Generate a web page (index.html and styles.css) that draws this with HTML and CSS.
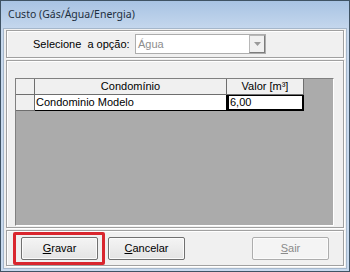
FILE: index.html
```html
<!DOCTYPE html>
<html lang="pt">
<head>
    <meta charset="UTF-8">
    <title>Custo (Gás/Água/Energia)</title>
    <link rel="stylesheet" href="styles.css">
</head>
<body>
    <div class="window">
        <div class="titlebar">Custo (Gás/Água/Energia)</div>
        <div class="client">
            <div class="panel panel-top">
                <span class="label">Selecione&nbsp; a opção:</span>
                <div class="combo">
                    <span class="combo-text">Água</span>
                    <span class="combo-btn">
                        <svg width="7" height="4" viewBox="0 0 7 4"><path d="M0 0 H7 L3.5 4 Z" fill="#9a9a9a"/></svg>
                    </span>
                </div>
            </div>
            <div class="panel panel-grid">
                <div class="grid">
                    <div class="row head">
                        <div class="cell ind"></div>
                        <div class="cell c1">Condomínio</div>
                        <div class="cell c2">Valor [m³]</div>
                    </div>
                    <div class="row data">
                        <div class="cell ind"></div>
                        <div class="cell c1">Condominio Modelo</div>
                        <div class="cell c2 edit">6,00</div>
                    </div>
                </div>
            </div>
            <div class="panel panel-buttons">
                <div class="highlight">
                    <button class="btn"><u>G</u>ravar</button>
                </div>
                <button class="btn"><u>C</u>ancelar</button>
                <div class="spacer"></div>
                <button class="btn disabled"><u>S</u>air</button>
            </div>
        </div>
    </div>
</body>
</html>
```

FILE: styles.css
```css
body {
    margin: 0;
    font-family: "Liberation Sans", Arial, sans-serif;
    font-size: 11px;
    color: #000;
}

.window {
    width: 350px;
    height: 272px;
    box-sizing: border-box;
    border: 1px solid #3f5364;
    background: linear-gradient(#a8c3e3, #c7d9ee 30px);
    display: flex;
    flex-direction: column;
}

.titlebar {
    height: 27px;
    line-height: 26px;
    padding-left: 7px;
    font-family: "Noto Sans", sans-serif;
    font-size: 10.5px;
    color: #1e2f40;
}

.client {
    flex: 1;
    margin: 0 2px 2px;
    background: #f0f0f0;
    border: 1px solid #a5b7cb;
    padding: 1px 2px 2px;
    display: flex;
    flex-direction: column;
    gap: 2px;
}

.panel {
    border: 1px solid #a0a0a0;
    box-shadow: inset 1px 1px 0 #fff, 1px 1px 0 #fff;
}

.panel-top {
    height: 26px;
    display: flex;
    align-items: center;
    padding-left: 26px;
}

.label {
    width: 102px;
    white-space: nowrap;
}

.combo {
    width: 131px;
    height: 20px;
    box-sizing: border-box;
    border: 1px solid #adadad;
    background: #fff;
    display: flex;
    align-items: center;
}

.combo-text {
    flex: 1;
    padding-left: 2px;
    color: #8d8d8d;
}

.combo-btn {
    width: 16px;
    height: 18px;
    box-sizing: border-box;
    border: 1px solid #b8b8b8;
    border-right-color: #7c7c7c;
    border-bottom-color: #7c7c7c;
    background: #f0f0f0;
    display: flex;
    align-items: center;
    justify-content: center;
}

.panel-grid {
    flex: 1;
    padding: 17px 9px 1px 8px;
    display: flex;
}

.grid {
    flex: 1;
    background: #ababab;
    border: 1px solid #808080;
    border-right-color: #fff;
    border-bottom-color: #fff;
}

.row {
    display: flex;
    height: 16px;
}

.cell {
    box-sizing: border-box;
    border-right: 1px solid #000;
    border-bottom: 1px solid #000;
    line-height: 15px;
    white-space: nowrap;
    overflow: hidden;
}

.ind {
    width: 19px;
    background: #f0f0f0;
    border-color: #6e6e6e;
}

.c1 {
    width: 192px;
}

.c2 {
    width: 77px;
}

.head .cell {
    background: #f0f0f0;
    text-align: center;
    border-color: #6e6e6e;
}

.data .c1 {
    background: #fff;
    padding-left: 1px;
}

.data .edit {
    background: #fff;
    border: 2px solid #000;
    border-top-width: 1px;
    padding-left: 1px;
    line-height: 13px;
}

.panel-buttons {
    height: 34px;
    display: flex;
    align-items: center;
    padding: 0 14px 0 6px;
}

.highlight {
    border: 3px solid #d9262e;
    border-radius: 2px;
    padding: 2px 4px 2px 5px;
    margin-right: 3px;
}

.btn {
    width: 77px;
    height: 23px;
    font-family: "Liberation Sans", Arial, sans-serif;
    font-size: 11px;
    background: linear-gradient(#f4f4f4, #e4e4e4);
    border: 1px solid #707070;
    box-shadow: inset 0 0 0 1px #fbfbfb;
    border-radius: 2px;
    padding: 0;
    color: #000;
}

.spacer {
    flex: 1;
}

.btn.disabled {
    color: #8a8a8a;
    border-color: #adadad;
    background: #f4f4f4;
}
```
